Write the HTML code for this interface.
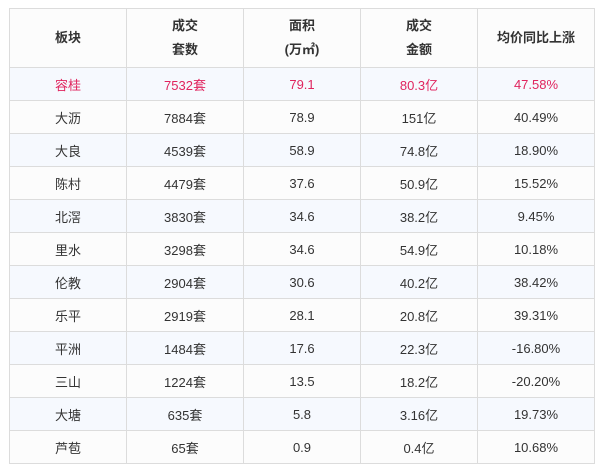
<!DOCTYPE html>
<html><head><meta charset="utf-8"><style>
body{margin:0;background:#fff;font-family:"Liberation Sans","Noto Sans CJK SC",sans-serif;}
table{position:absolute;left:9px;top:8px;border-collapse:collapse;width:586px;table-layout:fixed;}
td,th{border:1px solid #dcdcdc;text-align:center;font-size:13px;color:#333;padding:0;height:32px;}
th{height:58px;font-weight:bold;line-height:24px;background:#fcfcfc;font-size:13px;}
tr:nth-child(even) td{background:#f6f9fe;}
tr:nth-child(odd) td{background:#fcfcfc;}
tr.r td{color:#e0245e;}
</style></head><body>
<table>
<tr><th>板块</th><th>成交<br>套数</th><th>面积<br>(万㎡)</th><th>成交<br>金额</th><th>均价同比上涨</th></tr>
<tr class="r"><td>容桂</td><td>7532套</td><td>79.1</td><td>80.3亿</td><td>47.58%</td></tr>
<tr><td>大沥</td><td>7884套</td><td>78.9</td><td>151亿</td><td>40.49%</td></tr>
<tr><td>大良</td><td>4539套</td><td>58.9</td><td>74.8亿</td><td>18.90%</td></tr>
<tr><td>陈村</td><td>4479套</td><td>37.6</td><td>50.9亿</td><td>15.52%</td></tr>
<tr><td>北滘</td><td>3830套</td><td>34.6</td><td>38.2亿</td><td>9.45%</td></tr>
<tr><td>里水</td><td>3298套</td><td>34.6</td><td>54.9亿</td><td>10.18%</td></tr>
<tr><td>伦教</td><td>2904套</td><td>30.6</td><td>40.2亿</td><td>38.42%</td></tr>
<tr><td>乐平</td><td>2919套</td><td>28.1</td><td>20.8亿</td><td>39.31%</td></tr>
<tr><td>平洲</td><td>1484套</td><td>17.6</td><td>22.3亿</td><td>-16.80%</td></tr>
<tr><td>三山</td><td>1224套</td><td>13.5</td><td>18.2亿</td><td>-20.20%</td></tr>
<tr><td>大塘</td><td>635套</td><td>5.8</td><td>3.16亿</td><td>19.73%</td></tr>
<tr><td>芦苞</td><td>65套</td><td>0.9</td><td>0.4亿</td><td>10.68%</td></tr>
</table>
</body></html>
